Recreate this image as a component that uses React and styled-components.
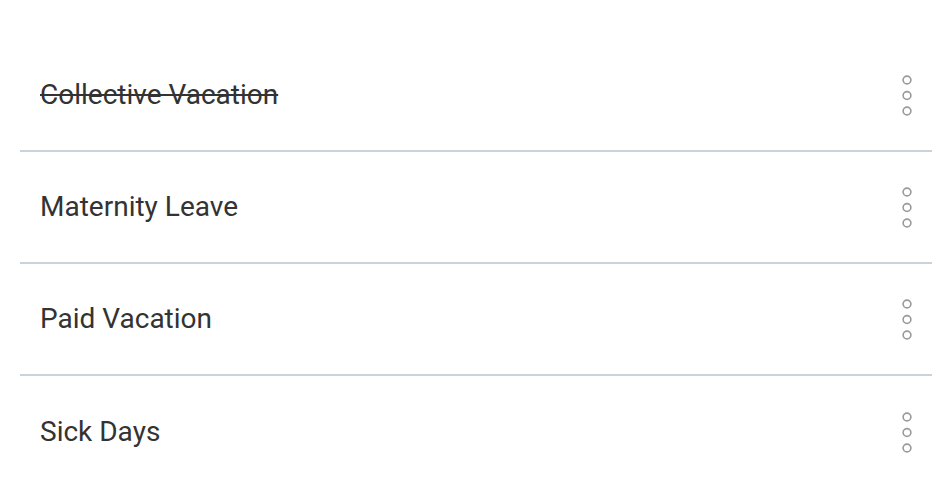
import React from "react";
import styled, { createGlobalStyle } from "styled-components";

const Global = createGlobalStyle`
  html, body { margin: 0; padding: 0; background: #fff; }
  body { font-family: Roboto, "Liberation Sans", sans-serif; }
`;

const List = styled.ul`
  list-style: none;
  margin: 0;
  padding: 40px 10px 0 20px;
`;

const Row = styled.li`
  height: 112px;
  display: flex;
  align-items: center;
  justify-content: space-between;
  padding: 0 20px 0 20px;
  border-bottom: 2px solid #c8d4dc;
  box-sizing: border-box;
  &:last-child { border-bottom: none; }
`;

const Label = styled.span`
  font-size: 28px;
  line-height: 1;
  color: #333;
  text-decoration: ${(p) => (p.$struck ? "line-through" : "none")};
`;

const MenuButton = styled.button`
  border: none;
  background: none;
  padding: 0;
  margin-top: 2px;
  display: flex;
  cursor: pointer;
`;

const Dots = () => (
  <svg width="10" height="42" viewBox="0 0 10 42">
    {[5, 20.5, 36].map((cy) => (
      <circle key={cy} cx="5" cy={cy} r="3.9" fill="none" stroke="#9a9a9a" strokeWidth="1.6" />
    ))}
  </svg>
);

const items = [
  { name: "Collective Vacation", struck: true },
  { name: "Maternity Leave" },
  { name: "Paid Vacation" },
  { name: "Sick Days" },
];

export default function App() {
  return (
    <>
      <Global />
      <List>
        {items.map((it) => (
          <Row key={it.name}>
            <Label $struck={it.struck}>{it.name}</Label>
            <MenuButton aria-label="More">
              <Dots />
            </MenuButton>
          </Row>
        ))}
      </List>
    </>
  );
}
